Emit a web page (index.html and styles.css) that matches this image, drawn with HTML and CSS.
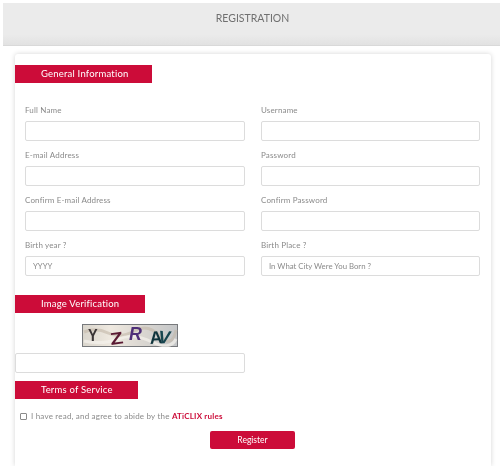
FILE: index.html
```html
<!DOCTYPE html>
<html lang="en">
<head>
    <meta charset="UTF-8">
    <meta name="viewport" content="width=device-width, initial-scale=1.0">
    <title>Registration</title>
    <link rel="stylesheet" href="styles.css">
</head>
<body>
    <header class="page-header">
        <h1>REGISTRATION</h1>
    </header>

    <main class="card">
        <h2 class="tab tab-general">General Information</h2>

        <div class="field-grid">
            <div class="field">
                <label>Full Name</label>
                <input type="text">
            </div>
            <div class="field">
                <label>Username</label>
                <input type="text">
            </div>
            <div class="field">
                <label>E-mail Address</label>
                <input type="text">
            </div>
            <div class="field">
                <label>Password</label>
                <input type="password">
            </div>
            <div class="field">
                <label>Confirm E-mail Address</label>
                <input type="text">
            </div>
            <div class="field">
                <label>Confirm Password</label>
                <input type="password">
            </div>
            <div class="field">
                <label>Birth year ?</label>
                <input type="text" placeholder="YYYY">
            </div>
            <div class="field">
                <label>Birth Place ?</label>
                <input type="text" placeholder="In What City Were You Born ?">
            </div>
        </div>

        <h2 class="tab tab-image">Image Verification</h2>

        <svg class="captcha" width="96" height="27" viewBox="0 0 96 27">
            <defs>
                <linearGradient id="captchaBg" x1="0" y1="0" x2="1" y2="0">
                    <stop offset="0" stop-color="#d9d5cc"/>
                    <stop offset="0.3" stop-color="#efe9e0"/>
                    <stop offset="0.6" stop-color="#dcd8d2"/>
                    <stop offset="1" stop-color="#c4c6c8"/>
                </linearGradient>
            </defs>
            <rect x="0.5" y="0.5" width="95" height="22" fill="url(#captchaBg)" stroke="#77797c"/>
            <path d="M2 8 Q14 3 26 9 T52 7 T78 12 T94 6" fill="none" stroke="#c3b8a8" stroke-width="3" opacity="0.6"/>
            <path d="M2 17 Q20 21 36 15 T70 18 T94 15" fill="none" stroke="#f5f2ec" stroke-width="3" opacity="0.7"/>
            <text transform="translate(6 17) scale(0.85 1)" class="cap cap-y">Y</text>
            <text transform="translate(29 21) rotate(-8) scale(1.25 1)" class="cap cap-z">Z</text>
            <text transform="translate(47 16) scale(1.05 1.1)" class="cap cap-r">R</text>
            <text transform="translate(68 20) rotate(-4) scale(1.05 1.05)" class="cap cap-a">A</text>
            <text transform="translate(76 19) rotate(3) scale(1.05 1.05)" class="cap cap-v">V</text>
        </svg>

        <input class="captcha-input" type="text">

        <h2 class="tab tab-terms">Terms of Service</h2>

        <div class="agree">
            <span class="check"></span>
            <span>I have read, and agree to abide by the <a href="#">ATiCLIX rules</a></span>
        </div>

        <div class="actions">
            <button type="button">Register</button>
        </div>
    </main>
</body>
</html>
```

FILE: styles.css
```css
html, body {
    height: 100%;
}

body {
    margin: 0;
    padding: 3px 0 0 3px;
    box-sizing: border-box;
    background-color: #fff;
    font-family: "Lato", "Open Sans", sans-serif;
    color: #8a8a8a;
    overflow: hidden;
    filter: blur(0.35px); /* the reference is a soft, scaled down picture */
}

.page-header {
    height: 43px;
    background: linear-gradient(#ebebeb 0, #ebebeb 75%, #e2e2e2 100%);
    border-bottom: 1px solid #d9d9d9;
    box-sizing: border-box;
    text-align: center;
}

.page-header h1 {
    margin: 0;
    padding: 8px 0 0 2px;
    font-size: 10.5px;
    line-height: 14px;
    font-weight: 400;
    color: #707070;
}

.card {
    width: 476px;
    height: 412px;
    margin: 8px 0 0 12px;
    padding-top: 11px;
    box-sizing: border-box;
    background-color: #fff;
    border-radius: 3px 3px 0 0;
    box-shadow: 0 0 5px #d4d4d4;
}

.tab {
    height: 18px;
    margin: 0;
    box-sizing: border-box;
    background-color: #cc0c39;
    color: #fff;
    font-size: 9.5px;
    line-height: 18px;
    font-weight: 400;
    letter-spacing: 0.2px;
}

.tab-general {
    width: 137px;
    padding-left: 26px;
}

.tab-image {
    width: 130px;
    padding-left: 26px;
    margin-top: 19px;
}

.tab-terms {
    width: 123px;
    padding-left: 26px;
    margin-top: 8px;
}

.field-grid {
    display: grid;
    grid-template-columns: 220px 219px;
    column-gap: 16px;
    row-gap: 8px;
    padding: 21px 0 0 10px;
}

.field label {
    display: block;
    height: 17px;
    font-size: 8px;
    line-height: 12px;
    letter-spacing: 0.15px;
}

input {
    display: block;
    width: 100%;
    height: 20px;
    padding: 0 7px;
    box-sizing: border-box;
    background-color: #fff;
    border: 1px solid #dcdcdc;
    border-radius: 2px;
    font-family: inherit;
    font-size: 7.8px;
    color: #777;
}

input::placeholder {
    color: #8a8a8a;
    opacity: 1;
}

.captcha {
    display: block;
    margin: 11px 0 0 67px;
}

.cap {
    font-family: "Liberation Sans", sans-serif;
    font-size: 17px;
    font-weight: 700;
}

.cap-y {
    fill: #3a3536;
}

.cap-z {
    fill: #5a1a33;
}

.cap-r {
    fill: #4e2f78;
    font-style: italic;
}

.cap-a {
    fill: #0f343c;
}

.cap-v {
    fill: #17454f;
    font-style: italic;
}

.captcha-input {
    width: 230px;
    margin-top: 2px;
}

.agree {
    display: flex;
    align-items: center;
    gap: 4px;
    margin: 11px 0 0 5px;
    font-size: 8px;
    line-height: 12px;
    letter-spacing: 0.2px;
}

.check {
    width: 7px;
    height: 7px;
    border: 1px solid #8a8a8a;
    border-radius: 1px;
    box-sizing: border-box;
}

.agree a {
    color: #cc0c39;
    font-weight: 700;
    text-decoration: none;
}

.actions {
    margin: 9px 0 0 195px;
}

button {
    display: block;
    width: 85px;
    height: 18px;
    padding: 0;
    background-color: #cc0c39;
    color: #fff;
    border: none;
    border-radius: 2px;
    font-family: inherit;
    font-size: 8.5px;
}
```
